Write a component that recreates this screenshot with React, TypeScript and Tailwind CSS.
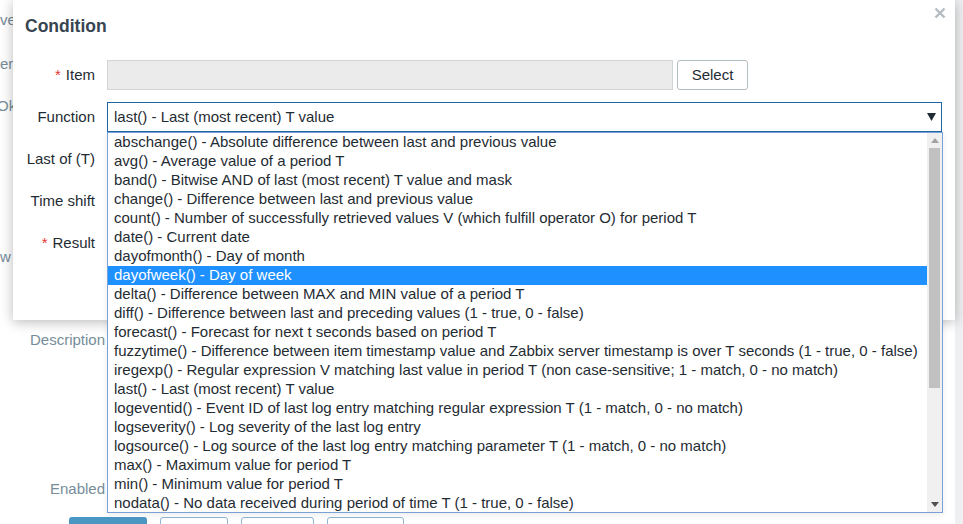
import React from "react";

const items = [
  "abschange() - Absolute difference between last and previous value",
  "avg() - Average value of a period T",
  "band() - Bitwise AND of last (most recent) T value and mask",
  "change() - Difference between last and previous value",
  "count() - Number of successfully retrieved values V (which fulfill operator O) for period T",
  "date() - Current date",
  "dayofmonth() - Day of month",
  "dayofweek() - Day of week",
  "delta() - Difference between MAX and MIN value of a period T",
  "diff() - Difference between last and preceding values (1 - true, 0 - false)",
  "forecast() - Forecast for next t seconds based on period T",
  "fuzzytime() - Difference between item timestamp value and Zabbix server timestamp is over T seconds (1 - true, 0 - false)",
  "iregexp() - Regular expression V matching last value in period T (non case-sensitive; 1 - match, 0 - no match)",
  "last() - Last (most recent) T value",
  "logeventid() - Event ID of last log entry matching regular expression T (1 - match, 0 - no match)",
  "logseverity() - Log severity of the last log entry",
  "logsource() - Log source of the last log entry matching parameter T (1 - match, 0 - no match)",
  "max() - Maximum value for period T",
  "min() - Minimum value for period T",
  "nodata() - No data received during period of time T (1 - true, 0 - false)",
];

function Label({ text, req }: { text: string; req?: boolean }) {
  return (
    <div className="w-[82px] shrink-0 text-right text-[15px] text-[#1f2c33] leading-[30px]">
      {req && <span className="text-[#e33734] mr-[5px]">*</span>}
      {text}
    </div>
  );
}

export default function App() {
  return (
    <div
      className="relative w-[963px] h-[524px] overflow-hidden bg-white"
      style={{ fontFamily: '"Liberation Sans", Arial, sans-serif' }}
    >
      {/* background page */}
      <div className="absolute right-0 top-0 h-full w-[8px] bg-[#eef0f1]" />
      <div className="text-[15px] text-[#768d99]">
        <div className="absolute left-0 top-[9px]">ve</div>
        <div className="absolute left-0 top-[53px]">er</div>
        <div className="absolute left-[-3px] top-[95px]">Ok</div>
        <div className="absolute left-0 top-[246px]">w</div>
        <div className="absolute left-[30px] top-[329px]">Description</div>
        <div className="absolute left-[50px] top-[478px]">Enabled</div>
        <div className="absolute top-[517px] left-[69px] flex gap-[13px]">
          <div className="w-[78px] h-[30px] rounded-[3px] bg-[#4b97c4]" />
          <div className="w-[68px] h-[30px] rounded-[3px] border border-[#8bb6d4] bg-white" />
          <div className="w-[73px] h-[30px] rounded-[3px] border border-[#8bb6d4] bg-white" />
          <div className="w-[77px] h-[30px] rounded-[3px] border border-[#8bb6d4] bg-white" />
        </div>
      </div>

      {/* modal */}
      <div className="absolute left-[13px] top-0 w-[942px] h-[320px] bg-white shadow-[0_2px_12px_rgba(0,0,0,0.28)]">
        <div className="relative pt-[10px]">
          <div className="absolute right-[9px] top-[7px] text-[#b3bcc1]">
            <svg width="12" height="12" viewBox="0 0 12 12">
              <path d="M1.5 1.5 L10.5 10.5 M10.5 1.5 L1.5 10.5" stroke="currentColor" strokeWidth="2.4" />
            </svg>
          </div>
          <div className="pl-[12px] pt-[6px] h-[50px] text-[17.5px] font-bold text-[#374550] leading-[20px]">
            Condition
          </div>
          <div className="flex flex-col gap-[12px]">
            <div className="flex items-center gap-[12px]">
              <Label text="Item" req />
              <div className="w-[566px] h-[30px] bg-[#ebebeb] border border-[#cfd5d8]" />
              <div className="ml-[-8px] w-[71px] h-[30px] rounded-[3px] border border-[#b4bdc2] bg-white flex items-center justify-center text-[15px] text-[#1f2c33]">
                Select
              </div>
            </div>
            <div className="flex items-center gap-[12px]">
              <Label text="Function" />
              <div className="w-[835px] h-[30px] border border-[#1f65a6] bg-white flex items-center justify-between pl-[6px] pr-[5px] text-[15px] text-[#1f2c33]">
                <span>last() - Last (most recent) T value</span>
                <svg width="9" height="8" viewBox="0 0 9 8">
                  <path d="M0 0 L9 0 L4.5 8 Z" fill="#1f2c33" />
                </svg>
              </div>
            </div>
            <div className="flex items-center gap-[12px]">
              <Label text="Last of (T)" />
            </div>
            <div className="flex items-center gap-[12px]">
              <Label text="Time shift" />
            </div>
            <div className="flex items-center gap-[12px]">
              <Label text="Result" req />
            </div>
          </div>
        </div>
      </div>

      {/* dropdown list */}
      <div className="absolute left-[107px] top-[132px] w-[836px] h-[381px] border border-[#7aa0d8] bg-white flex shadow-[0_2px_6px_rgba(0,0,0,0.08)]">
        <div className="flex-1 overflow-hidden">
          {items.map((t, i) => (
            <div
              key={t}
              className={`h-[19px] leading-[18px] pl-[6px] whitespace-nowrap text-[15px] ${
                i === 7 ? "bg-[#1e90ff] text-white" : "text-[#1f2c33]"
              }`}
            >
              {t}
            </div>
          ))}
        </div>
        <div className="w-[15px] bg-[#f0f0f0] flex flex-col items-center">
          <div className="h-[15px] flex items-center justify-center">
            <svg width="8" height="5" viewBox="0 0 8 5">
              <path d="M0 5 L4 0 L8 5 Z" fill="#a3a3a3" />
            </svg>
          </div>
          <div className="w-[11px] h-[240px] bg-[#c1c1c1]" />
          <div className="flex-1" />
          <div className="h-[15px] flex items-center justify-center">
            <svg width="8" height="5" viewBox="0 0 8 5">
              <path d="M0 0 L8 0 L4 5 Z" fill="#505050" />
            </svg>
          </div>
        </div>
      </div>
    </div>
  );
}
